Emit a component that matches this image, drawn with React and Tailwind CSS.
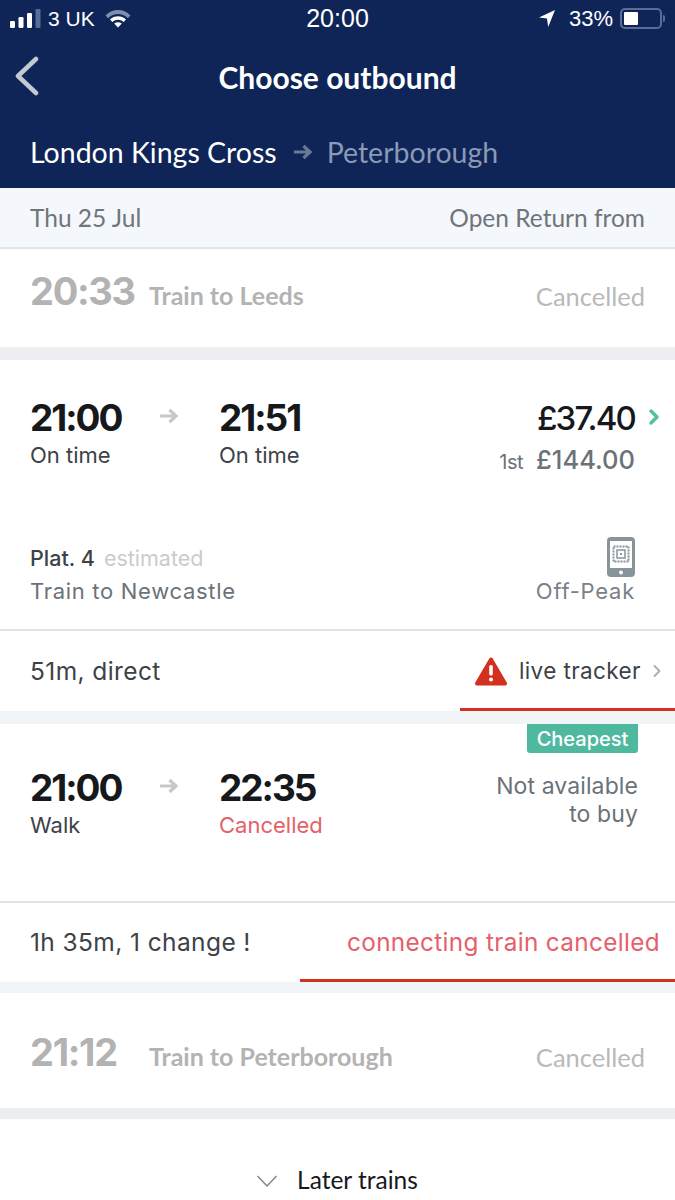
import React from "react";
import { ChevronRight } from "lucide-react";

const Arrow = ({ className }) => (
  <svg viewBox="0 0 20 16" className={className} fill="none" stroke="currentColor" strokeWidth="3.2">
    <path d="M1 8h16M10.5 2l6.5 6-6.5 6" />
  </svg>
);

// Status bar icons
const Signal = () => (
  <svg width="31" height="19" viewBox="0 0 31 19" fill="#fff">
    <rect x="0" y="12" width="5" height="7" rx="1.2" />
    <rect x="8.5" y="8" width="5" height="11" rx="1.2" />
    <rect x="17" y="4" width="5" height="15" rx="1.2" />
    <rect x="25.5" y="0" width="5" height="19" rx="1.2" fill="#5a6d95" />
  </svg>
);

const Wifi = () => (
  <svg width="26" height="19" viewBox="0 0 26 19">
    <path d="M0.5 6.5C7.5 -0.8 18.5 -0.8 25.5 6.5L22.8 9.2C17.2 3.6 8.8 3.6 3.2 9.2Z" fill="#7f8eae" />
    <path d="M5 10.6C9.6 6.2 16.4 6.2 21 10.6L18.6 13C15.2 10 10.8 10 7.4 13Z" fill="#fff" />
    <path d="M9.2 14.6C11.6 12.8 14.4 12.8 16.8 14.6L13 18.6Z" fill="#fff" />
  </svg>
);

const Location = () => (
  <svg width="16" height="17" viewBox="0 0 16 17" fill="#fff">
    <path d="M16 0L0 7.6L8 8.6L9.2 17Z" />
  </svg>
);

const Battery = () => (
  <div className="flex items-center gap-[1px]">
    <div className="w-[42px] h-[21px] rounded-[5px] border-2 border-[#5a6d95] p-[2px]">
      <div className="w-[14px] h-full bg-white rounded-[1px]" />
    </div>
    <div className="w-[2px] h-[7px] bg-[#5a6d95] rounded-r" />
  </div>
);

const BackChevron = () => (
  <svg width="24" height="40" viewBox="0 0 24 40" fill="none" stroke="#c3c9d3" strokeWidth="4.5" strokeLinecap="round" strokeLinejoin="round" className="absolute left-[15px] top-[19px]">
    <path d="M21 3L3 20l18 17" />
  </svg>
);

const MobileTicket = () => (
  <svg width="28" height="40" viewBox="0 0 28 40">
    <rect x="0" y="0" width="28" height="40" rx="4" fill="#87949a" />
    <rect x="3" y="4" width="22" height="27" fill="#fff" />
    <rect x="6.5" y="9.5" width="15" height="15" fill="none" stroke="#87949a" strokeWidth="2" strokeDasharray="2 1" />
    <rect x="10" y="13" width="8" height="8" fill="none" stroke="#87949a" strokeWidth="1.5" />
    <rect x="13" y="16" width="2" height="2" fill="#87949a" />
    <circle cx="14" cy="35.5" r="2" fill="#fff" />
  </svg>
);

const Warning = () => (
  <svg width="32" height="29" viewBox="0 0 32 29">
    <path d="M16 2.5L30 26.5H2Z" fill="#d3301f" stroke="#d3301f" strokeWidth="4" strokeLinejoin="round" />
    <rect x="14.2" y="8" width="3.6" height="10.5" rx="1.6" fill="#fff" />
    <circle cx="16" cy="22.5" r="2" fill="#fff" />
  </svg>
);

const CancelledRow = ({ time, label, height, pad }) => (
  <div className={`${height} ${pad} bg-white flex items-center justify-between px-[30px]`}>
    <div className="flex items-baseline">
      <span className="w-[119px] text-[38px] leading-[44px] font-bold tracking-[-1.3px] text-[#b3b3b3]">{time}</span>
      <span className="text-[25px] font-bold text-[#b3b3b3] font-['Lato',sans-serif]">{label}</span>
    </div>
    <span className="text-[25.5px] translate-y-[4px] text-[#b9b9b9] font-['Lato',sans-serif]">Cancelled</span>
  </div>
);

const Times = ({ dep, depNote, arr, arrNote, arrColor }) => (
  <div className="flex">
    <div className="w-[129px]">
      <div className="text-[37px] leading-[44px] font-bold tracking-[-2px] text-[#16181b]">{dep}</div>
      <div className="text-[22px] leading-[30px] text-[#3c4247]">{depNote}</div>
    </div>
    <Arrow className="w-[20px] h-[16px] mt-[12px] text-[#c5c9cc]" />
    <div className="ml-[40px]">
      <div className="text-[37px] leading-[44px] font-bold tracking-[-2px] text-[#16181b]">{arr}</div>
      <div className={`text-[22px] leading-[30px] ${arrColor}`}>{arrNote}</div>
    </div>
  </div>
);

export default function App() {
  return (
    <div className="w-[675px] h-[1200px] overflow-hidden bg-white font-['Inter',sans-serif]">
      {/* Header */}
      <div className="h-[188px] bg-[#0f2557] text-white">
        <div className="h-[37px] px-[10px] flex items-center justify-between text-[21px] font-['Liberation_Sans',sans-serif]">
          <div className="w-[200px] flex items-center gap-[7px]">
            <Signal />
            <span>3 UK</span>
            <span className="ml-[3px]"><Wifi /></span>
          </div>
          <span className="text-[25px]">20:00</span>
          <div className="w-[200px] flex items-center justify-end gap-[7px]">
            <span className="mr-[7px]"><Location /></span>
            <span className="text-[22px]">33%</span>
            <Battery />
          </div>
        </div>
        <div className="relative h-[80px] flex items-center justify-center">
          <BackChevron />
          <span className="text-[30px] font-bold font-['Lato',sans-serif]">Choose outbound</span>
        </div>
        <div className="pl-[30px] pt-[14px] flex items-center text-[28.5px] font-['Lato',sans-serif]">
          <span>London Kings Cross</span>
          <Arrow className="w-[20px] h-[16px] ml-[16px] mr-[14px] text-[#6b7a99]" />
          <span className="text-[#8b98b6]">Peterborough</span>
        </div>
      </div>

      {/* Date bar */}
      <div className="h-[61px] bg-[#f4f7fb] border-b-2 border-[#e2e4e7] px-[30px] pt-[2px] flex items-center justify-between text-[24.5px] text-[#70757a] font-['Lato',sans-serif]">
        <span>Thu 25 Jul</span>
        <span>Open Return from</span>
      </div>

      <CancelledRow time="20:33" label="Train to Leeds" height="h-[98px]" pad="pb-[12px]" />
      <div className="h-[13px] bg-[#eceef2]" />

      {/* Direct train */}
      <div className="h-[271px] bg-white flex flex-col border-b-2 border-[#e2e4e7] pl-[30px] pr-[40px]">
        <div className="pt-[36px] flex justify-between">
          <Times dep="21:00" depNote="On time" arr="21:51" arrNote="On time" arrColor="text-[#3c4247]" />
          <div className="flex flex-col items-end relative">
            <div className="text-[33px] leading-[44px] font-medium tracking-[-1.8px] text-[#16181b]">£37.40</div>
            <ChevronRight className="absolute -right-[31px] top-[9px] text-[#52bfa5]" size={24} strokeWidth={3.4} />
            <div className="flex items-baseline gap-[13px] mt-[2px]">
              <span className="text-[20px] tracking-[-0.5px] text-[#6b7278]">1st</span>
              <span className="text-[25.5px] leading-[36px] font-medium text-[#6b7278]">£144.00</span>
            </div>
          </div>
        </div>
        <div className="mt-auto pb-[21px] flex items-end justify-between">
          <div>
            <div className="text-[21.5px] leading-[32px] flex gap-[9px]">
              <span className="font-medium text-[#3c4247]">Plat. 4</span>
              <span className="text-[#c9cccf]">estimated</span>
            </div>
            <div className="text-[22px] leading-[34px] text-[#6b7278] tracking-[0.7px]">Train to Newcastle</div>
          </div>
          <div className="flex flex-col items-end pb-[3px]">
            <MobileTicket />
            <div className="text-[22px] leading-[28px] text-[#7a8187] tracking-[0.75px]">Off-Peak</div>
          </div>
        </div>
      </div>
      <div className="relative h-[80px] bg-white pl-[30px] pr-[8px] flex items-center justify-between">
        <span className="text-[24.5px] text-[#3c4247] tracking-[0.4px]">51m, direct</span>
        <div className="flex items-center">
          <Warning />
          <span className="ml-[12px] text-[22.5px] text-[#3c4247] tracking-[0.4px]">live tracker</span>
          <ChevronRight className="ml-[6px] text-[#a9adb0]" size={20} strokeWidth={2.2} />
        </div>
        <div className="absolute right-0 bottom-0 w-[215px] h-[3px] bg-[#d3301f]" />
      </div>
      <div className="h-[13px] bg-[#f2f5f8]" />

      {/* Connecting train */}
      <div className="h-[179px] bg-white border-b-2 border-[#e2e4e7] pl-[30px] pr-[37px] flex justify-between">
        <div className="pt-[42px]">
          <Times dep="21:00" depNote="Walk" arr="22:35" arrNote="Cancelled" arrColor="text-[#e5606a]" />
        </div>
        <div className="flex flex-col items-end">
          <div className="h-[29px] w-[111px] bg-[#4fb99f] rounded-b-[3px] flex items-center justify-center text-[20px] font-medium text-white">Cheapest</div>
          <div className="mt-[19px] text-[23px] leading-[28px] text-[#6b7278] text-right tracking-[0.1px]">Not available<br />to buy</div>
        </div>
      </div>
      <div className="relative h-[79px] bg-white pl-[30px] pr-[15px] flex items-center justify-between">
        <span className="text-[24.5px] text-[#3c4247] tracking-[0.4px]">1h 35m, 1 change !</span>
        <span className="text-[24.3px] text-[#e5606a] tracking-[0.35px]">connecting train cancelled</span>
        <div className="absolute right-0 bottom-0 w-[375px] h-[3px] bg-[#d3301f]" />
      </div>
      <div className="h-[11px] bg-[#f2f5f8]" />

      <CancelledRow time="21:12" label="Train to Peterborough" height="h-[115px]" pad="pt-[5px]" />
      <div className="h-[11px] bg-[#eceef2]" />

      {/* Later trains */}
      <div className="h-[81px] bg-white flex items-center justify-center pt-[42px]">
        <svg width="20" height="12" viewBox="0 0 20 12" fill="none" stroke="#7d8388" strokeWidth="1.4" className="mr-[20px]">
          <path d="M0.5 1L10 11l9.5-10" />
        </svg>
        <span className="text-[24.5px] text-[#16181b] font-['Lato',sans-serif]">Later trains</span>
      </div>
    </div>
  );
}
